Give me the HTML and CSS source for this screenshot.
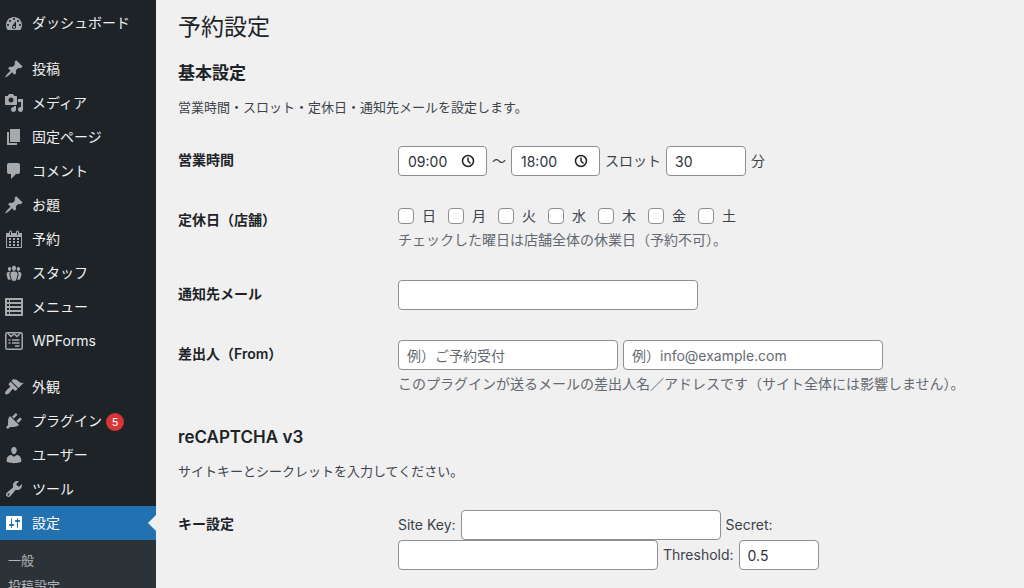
FILE: index.html
```html
<!DOCTYPE html>
<html lang="ja">
<head>
    <meta charset="UTF-8">
    <meta name="viewport" content="width=device-width, initial-scale=1.0">
    <title>予約設定</title>
    <link rel="stylesheet" href="styles.css">
</head>
<body>
    <div class="admin">
        <nav class="sidebar">
            <ul class="menu">
                <li><a href="#" class="menu-link">
                    <svg class="icon" viewBox="0 0 20 20"><path fill-rule="evenodd" d="M3.76 17h12.48C17.34 15.63 18 13.89 18 12c0-4.42-3.58-8-8-8s-8 3.58-8 8c0 1.89.66 3.63 1.76 5zM10 5c.55 0 1 .45 1 1s-.45 1-1 1-1-.45-1-1 .45-1 1-1zM6 7c.55 0 1 .45 1 1s-.45 1-1 1-1-.45-1-1 .45-1 1-1zm8 0c.55 0 1 .45 1 1s-.45 1-1 1-1-.45-1-1 .45-1 1-1zm-5.37 5.55L12 8v6c0 1.1-.9 2-2 2s-2-.9-2-2c0-.57.24-1.08.63-1.45zM4 11c.55 0 1 .45 1 1s-.45 1-1 1-1-.45-1-1 .45-1 1-1zm12 0c.55 0 1 .45 1 1s-.45 1-1 1-1-.45-1-1 .45-1 1-1zm-5 3c0-.55-.45-1-1-1s-1 .45-1 1 .45 1 1 1 1-.45 1-1z"/></svg>
                    <span>ダッシュボード</span>
                </a></li>
                <li class="separator"></li>
                <li><a href="#" class="menu-link">
                    <svg class="icon" viewBox="0 0 20 20"><path d="M10.44 3.02l1.82-1.82 6.36 6.35-1.83 1.82c-1.05-.68-2.48-.57-3.41.36l-.75.75c-.92.93-1.04 2.35-.35 3.41l-1.83 1.82-2.41-2.41-2.8 2.79c-.42.42-3.38 2.71-3.8 2.29s1.86-3.39 2.28-3.81l2.79-2.79L4.1 9.36l1.83-1.82c1.05.69 2.48.57 3.4-.36l.75-.75c.93-.92 1.05-2.35.36-3.41z"/></svg>
                    <span>投稿</span>
                </a></li>
                <li><a href="#" class="menu-link">
                    <svg class="icon" viewBox="0 0 20 20"><path fill-rule="evenodd" d="M13 11V4c0-.55-.45-1-1-1h-1.67L9 1H5L3.67 3H2c-.55 0-1 .45-1 1v7c0 .55.45 1 1 1h10c.55 0 1-.45 1-1zM7 4.5c1.38 0 2.5 1.12 2.5 2.5S8.38 9.5 7 9.5 4.5 8.38 4.5 7 5.62 4.5 7 4.5zM14 6h5v10.5c0 1.38-1.12 2.5-2.5 2.5S14 17.88 14 16.5s1.12-2.5 2.5-2.5c.17 0 .34.02.5.05V9h-3V6zm-4 8.05V13h2v3.5c0 1.38-1.12 2.5-2.5 2.5S7 17.88 7 16.5 8.12 14 9.5 14c.17 0 .34.02.5.05z"/></svg>
                    <span>メディア</span>
                </a></li>
                <li><a href="#" class="menu-link">
                    <svg class="icon" viewBox="0 0 20 20"><path d="M6 15V2h10v13H6zm-1 1h8v2H3V5h2v11z"/></svg>
                    <span>固定ページ</span>
                </a></li>
                <li><a href="#" class="menu-link">
                    <svg class="icon" viewBox="0 0 20 20"><path d="M5 2h9c1.1 0 2 .9 2 2v7c0 1.1-.9 2-2 2h-2l-5 5v-5H5c-1.1 0-2-.9-2-2V4c0-1.1.9-2 2-2z"/></svg>
                    <span>コメント</span>
                </a></li>
                <li><a href="#" class="menu-link">
                    <svg class="icon" viewBox="0 0 20 20"><path d="M10.44 3.02l1.82-1.82 6.36 6.35-1.83 1.82c-1.05-.68-2.48-.57-3.41.36l-.75.75c-.92.93-1.04 2.35-.35 3.41l-1.83 1.82-2.41-2.41-2.8 2.79c-.42.42-3.38 2.71-3.8 2.29s1.86-3.39 2.28-3.81l2.79-2.79L4.1 9.36l1.83-1.82c1.05.69 2.48.57 3.4-.36l.75-.75c.93-.92 1.05-2.35.36-3.41z"/></svg>
                    <span>お題</span>
                </a></li>
                <li><a href="#" class="menu-link">
                    <svg class="icon" viewBox="0 0 20 20"><path fill-rule="evenodd" d="M15 4h3v15H2V4h3V3a1.5 1.5 0 0 1 3 0v1h4V3a1.5 1.5 0 0 1 3 0zM6 3v2.500a.5.5 0 0 0 1 0V3a.5.5 0 0 0-1 0zm7 0v2.500a.5.5 0 0 0 1 0V3a.5.5 0 0 0-1 0zm4 15V8H3v10h14zM7 9v2H5V9h2zm2 0h2v2H9V9zm4 2V9h2v2h-2zm-6 1v2H5v-2h2zm2 0h2v2H9v-2zm4 2v-2h2v2h-2zm-6 1v2H5v-2h2zm4 2H9v-2h2v2zm4 0h-2v-2h2v2z"/></svg>
                    <span>予約</span>
                </a></li>
                <li><a href="#" class="menu-link">
                    <svg class="icon" viewBox="0 0 20 20"><path d="M8.03 4.46c-.29 1.28.55 3.46 1.97 3.46 1.41 0 2.25-2.18 1.96-3.46-.22-.98-1.08-1.63-1.96-1.63-.89 0-1.74.65-1.97 1.63zm-4.13.9c-.25 1.08.47 2.93 1.67 2.93s1.92-1.85 1.67-2.93c-.19-.83-.92-1.39-1.67-1.39s-1.48.56-1.67 1.39zm8.86 0c-.25 1.08.47 2.93 1.66 2.93 1.2 0 1.92-1.85 1.67-2.93-.19-.83-.92-1.39-1.67-1.39-.74 0-1.47.56-1.66 1.39zm-.59 11.43l1.25-4.3C14.2 10 12.71 8.47 10 8.47c-2.72 0-4.21 1.53-3.44 4.02l1.26 4.3C8.05 17.51 9 18 10 18c.98 0 1.94-.49 2.17-1.21zm-6.1-7.63c-.49.67-.96 1.83-.42 3.59l1.12 3.79c-.34.2-.77.31-1.2.31-.85 0-1.65-.41-1.85-1.03l-1.07-3.65c-.65-2.11.61-3.4 2.92-3.4.27 0 .54.02.79.06-.1.1-.2.22-.29.33zm8.35-.39c2.31 0 3.58 1.29 2.92 3.4l-1.07 3.65c-.2.62-1 1.03-1.85 1.03-.43 0-.86-.11-1.2-.31l1.11-3.77c.55-1.78.08-2.94-.42-3.61-.08-.11-.18-.23-.28-.33.25-.04.51-.06.79-.06z"/></svg>
                    <span>スタッフ</span>
                </a></li>
                <li><a href="#" class="menu-link">
                    <svg class="icon" viewBox="0 0 20 20"><path fill-rule="evenodd" d="M2 19h16c.55 0 1-.45 1-1V2c0-.55-.45-1-1-1H2c-.55 0-1 .45-1 1v16c0 .55.45 1 1 1zM3 3h2v2H3zM6 3h11v2H6zM3 7h2v2H3zM6 7h11v2H6zM3 11h2v2H3zM6 11h11v2H6zM3 15h2v2H3zM6 15h11v2H6z"/></svg>
                    <span>メニュー</span>
                </a></li>
                <li><a href="#" class="menu-link">
                    <svg class="icon line-icon" viewBox="0 0 20 20"><rect x="1.8" y="1.8" width="16.4" height="16.4" rx="1.5"/><path d="M4 2.5l3 3 3-2.5 3 2.5 3-3M4.5 9h2M8 9h7.5M4.5 12h2M8 12h7.5M11 15h4.5"/></svg>
                    <span>WPForms</span>
                </a></li>
                <li class="separator"></li>
                <li><a href="#" class="menu-link">
                    <svg class="icon" viewBox="0 0 20 20"><path d="M14.48 11.06L7.41 3.99l1.5-1.5c.5-.56 2.3-.47 3.51.32 1.21.8 1.43 1.28 2.91 2.1 1.18.64 2.45 1.26 4.45.85zm-.71.71L6.7 4.7 4.93 6.47c-.39.39-.39 1.02 0 1.41l1.06 1.06c.39.39.39 1.03 0 1.42-.6.6-1.43 1.11-2.21 1.69-.35.26-.7.53-1.01.84C1.43 14.23.4 16.08 1.4 17.07c.99 1 2.84-.03 4.18-1.36.31-.31.58-.66.85-1.02.57-.78 1.08-1.61 1.69-2.21.39-.39 1.02-.39 1.41 0l1.06 1.06c.39.39 1.02.39 1.41 0z"/></svg>
                    <span>外観</span>
                </a></li>
                <li><a href="#" class="menu-link">
                    <svg class="icon" viewBox="0 0 20 20"><path d="M13.11 4.36L9.87 7.6 8 5.73l3.24-3.24c.35-.34 1.05-.2 1.56.32.52.51.66 1.21.31 1.55zm-8 1.77l.91-1.12 9.01 9.01-1.19.84c-.71.71-2.63 1.16-3.82 1.16H6.14L4.9 17.26c-.59.59-1.54.59-2.12 0-.59-.58-.59-1.53 0-2.12l1.24-1.24v-3.88c0-1.13.4-3.19 1.09-3.89zm7.26 3.97l3.24-3.24c.34-.35 1.04-.21 1.55.31.52.51.66 1.21.31 1.55l-3.24 3.25z"/></svg>
                    <span>プラグイン<span class="count">5</span></span>
                </a></li>
                <li><a href="#" class="menu-link">
                    <svg class="icon" viewBox="0 0 20 20"><path d="M10 9.25c-2.27 0-2.73-3.44-2.73-3.44C7 4.02 7.82 2 9.97 2c2.16 0 2.98 2.02 2.71 3.81 0 0-.41 3.44-2.68 3.44zm0 2.57L12.72 10c2.39 0 4.52 2.33 4.52 4.53v2.49s-3.65 1.13-7.24 1.13c-3.65 0-7.24-1.13-7.24-1.13v-2.49c0-2.25 1.94-4.48 4.47-4.48z"/></svg>
                    <span>ユーザー</span>
                </a></li>
                <li><a href="#" class="menu-link">
                    <svg class="icon" viewBox="0 0 20 20"><path fill-rule="evenodd" d="M16.68 9.77c-1.34 1.34-3.3 1.67-4.95.99l-5.41 6.52c-.99.99-2.59.99-3.58 0s-.99-2.59 0-3.57l6.52-5.42c-.68-1.65-.35-3.61.99-4.95 1.28-1.28 3.12-1.62 4.72-1.06l-2.89 2.89 2.82 2.82 2.86-2.87c.53 1.58.18 3.39-1.08 4.65zM3.81 16.21c.4.39 1.04.39 1.43 0 .4-.4.4-1.04 0-1.43-.39-.4-1.03-.4-1.43 0-.39.39-.39 1.03 0 1.43z"/></svg>
                    <span>ツール</span>
                </a></li>
                <li>
                    <a href="#" class="menu-link current">
                        <svg class="icon" viewBox="0 0 20 20"><path fill-rule="evenodd" d="M18 16V4c0-.55-.45-1-1-1H3c-.55 0-1 .45-1 1v12c0 .55.45 1 1 1h14c.55 0 1-.45 1-1zM8 11h1c.55 0 1 .45 1 1s-.45 1-1 1H8v1.5c0 .28-.22.5-.5.5s-.5-.22-.5-.5V13H6c-.55 0-1-.45-1-1s.45-1 1-1h1V5.5c0-.28.22-.5.5-.5s.5.22.5.5V11zm5-2h-1c-.55 0-1-.45-1-1s.45-1 1-1h1V5.5c0-.28.22-.5.5-.5s.5.22.5.5V7h1c.55 0 1 .45 1 1s-.45 1-1 1h-1v5.5c0 .28-.22.5-.5.5s-.5-.22-.5-.5V9z"/></svg>
                        <span>設定</span>
                    </a>
                    <ul class="submenu">
                        <li><a href="#">一般</a></li>
                        <li><a href="#">投稿設定</a></li>
                    </ul>
                </li>
            </ul>
        </nav>

        <main class="content">
            <h1>予約設定</h1>
            <form>
                <h2>基本設定</h2>
                <p class="intro">営業時間・スロット・定休日・通知先メールを設定します。</p>
                <table class="form-table">
                    <tr>
                        <th scope="row"><label for="open-time">営業時間</label></th>
                        <td>
                            <div class="fields">
                                <span class="time-field">
                                    <input type="text" id="open-time" class="time" value="09:00">
                                    <svg class="clock" viewBox="0 0 14 14"><circle cx="7" cy="7" r="5.5"/><path d="M7 3.5V7l2.5 2.5"/></svg>
                                </span>
                                <span>〜</span>
                                <span class="time-field">
                                    <input type="text" class="time" value="18:00" aria-label="終了時間">
                                    <svg class="clock" viewBox="0 0 14 14"><circle cx="7" cy="7" r="5.5"/><path d="M7 3.5V7l2.5 2.5"/></svg>
                                </span>
                                <label for="slot">スロット</label>
                                <input type="text" inputmode="numeric" id="slot" class="small" value="30">
                                <span>分</span>
                            </div>
                        </td>
                    </tr>
                    <tr>
                        <th scope="row">定休日（店舗）</th>
                        <td>
                            <div class="days">
                                <label><input type="checkbox">日</label>
                                <label><input type="checkbox">月</label>
                                <label><input type="checkbox">火</label>
                                <label><input type="checkbox">水</label>
                                <label><input type="checkbox">木</label>
                                <label><input type="checkbox">金</label>
                                <label><input type="checkbox">土</label>
                            </div>
                            <p class="description">チェックした曜日は店舗全体の休業日（予約不可）。</p>
                        </td>
                    </tr>
                    <tr>
                        <th scope="row"><label for="notify">通知先メール</label></th>
                        <td><div class="fields"><input type="email" id="notify" class="email"></div></td>
                    </tr>
                    <tr>
                        <th scope="row"><label for="from-name">差出人（From）</label></th>
                        <td>
                            <div class="fields">
                                <input type="text" id="from-name" class="name" placeholder="例）ご予約受付">
                                <input type="email" class="key" placeholder="例）info@example.com" aria-label="差出人アドレス">
                            </div>
                            <p class="description">このプラグインが送るメールの差出人名／アドレスです（サイト全体には影響しません）。</p>
                        </td>
                    </tr>
                </table>

                <h2>reCAPTCHA v3</h2>
                <p class="intro">サイトキーとシークレットを入力してください。</p>
                <table class="form-table">
                    <tr>
                        <th scope="row">キー設定</th>
                        <td>
                            <div class="fields">
                                <label for="site-key">Site Key:</label>
                                <input type="text" id="site-key" class="key">
                                <label for="secret">Secret:</label>
                                <input type="text" id="secret" class="key">
                                <label for="threshold">Threshold:</label>
                                <input type="text" inputmode="decimal" id="threshold" class="small" value="0.5">
                            </div>
                        </td>
                    </tr>
                </table>
            </form>
        </main>
    </div>
</body>
</html>
```

FILE: styles.css
```css
* {
    box-sizing: border-box;
}
body {
    margin: 0;
    background: #f0f0f1;
    color: #3c434a;
    font-family: Inter, "Noto Sans CJK JP", sans-serif;
    font-size: 13px;
    line-height: 20px;
}
ul {
    list-style: none;
    margin: 0;
    padding: 0;
}
a {
    text-decoration: none;
}
.admin {
    display: flex;
    height: 100vh;
    overflow: hidden;
}

/* Sidebar */
.sidebar {
    flex: 0 0 156px;
    background: #1d2327;
    padding-top: 6px;
}
.menu-link {
    display: flex;
    align-items: center;
    gap: 8px;
    height: 34px;
    padding-left: 4px;
    color: #f0f0f1;
    font-size: 14px;
}
.separator {
    height: 12px;
}
.icon {
    width: 20px;
    height: 20px;
    fill: #a7aaad;
}
.line-icon {
    fill: none;
    stroke: #a7aaad;
    stroke-width: 1.5;
}
.count {
    display: inline-block;
    width: 18px;
    height: 18px;
    margin-left: 4px;
    border-radius: 9px;
    background: #d63638;
    color: #fff;
    font-size: 11px;
    line-height: 18px;
    text-align: center;
}
.current {
    position: relative;
    background: #2271b1;
    color: #fff;
}
.current .icon {
    fill: #fff;
}
.current::after {
    content: "";
    position: absolute;
    right: 0;
    top: 9px;
    border: 8px solid transparent;
    border-left-width: 0;
    border-right-color: #f0f0f1;
}
.submenu {
    background: #2c3338;
    padding: 7px 0;
}
.submenu a {
    display: block;
    padding: 3px 8px;
    color: #b4b7ba;
}

/* Settings form */
.content {
    flex: 1;
    min-width: 0;
    padding: 9px 20px 0 22px;
}
h1 {
    margin: 0;
    color: #1d2327;
    font-size: 23px;
    font-weight: 400;
    line-height: 36px;
}
h2 {
    margin: 18px 0 16px;
    color: #1d2327;
    font-size: 17px;
    font-weight: 600;
    line-height: 20px;
}
.intro {
    margin: 0;
    line-height: 16px;
}
.form-table {
    width: 100%;
    margin-top: 16px;
    border-collapse: collapse;
    font-size: 14px;
}
.form-table th {
    width: 210px;
    padding: 19px 10px 19px 0;
    color: #1d2327;
    font-weight: 600;
    text-align: left;
    vertical-align: top;
}
.form-table td {
    padding: 15px 10px;
    vertical-align: middle;
}
.fields {
    display: flex;
    flex-wrap: wrap;
    align-items: center;
    column-gap: 5px;
}
input {
    height: 30px;
    margin: 0;
    padding: 0 8px;
    border: 1px solid #8c8f94;
    border-radius: 4px;
    background: #fff;
    color: #2c3338;
    font-family: inherit;
    font-size: 14px;
}
input::placeholder {
    color: #646970;
}
.time-field {
    position: relative;
}
.time-field .time {
    display: block;
    width: 89px;
    padding-left: 9px;
}
.clock {
    position: absolute;
    right: 12px;
    top: 8px;
    width: 14px;
    height: 14px;
    fill: none;
    stroke: #1d2327;
    stroke-width: 1.5;
}
.small {
    width: 80px;
}
.name {
    width: 220px;
}
.key {
    width: 260px;
}
.email {
    width: 300px;
}
.days {
    display: flex;
    flex-wrap: wrap;
    gap: 12px;
}
.days label {
    display: flex;
    align-items: center;
    gap: 8px;
}
.days input {
    appearance: none;
    width: 16px;
    height: 16px;
    padding: 0;
}
.description {
    margin: 4px 0 0;
    color: #646970;
}
```
